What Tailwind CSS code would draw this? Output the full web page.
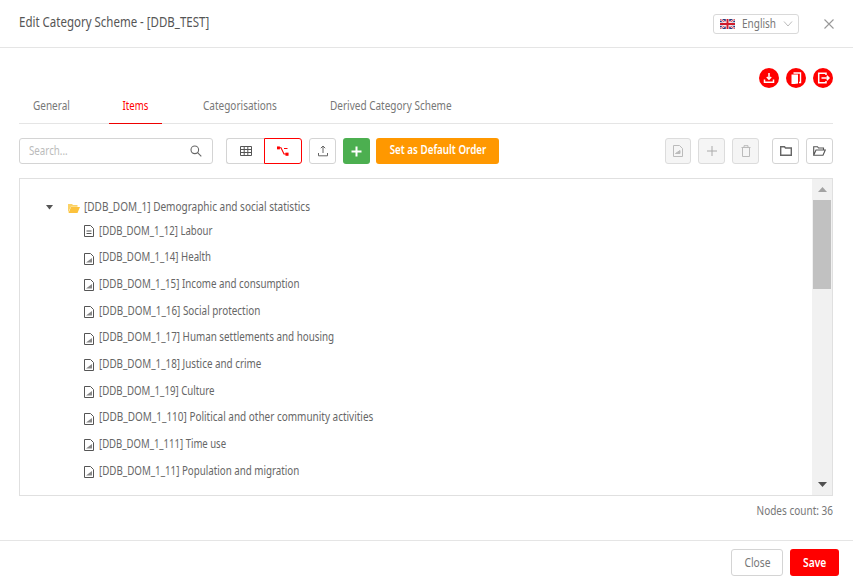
<!DOCTYPE html>
<html lang="en">
<head>
  <meta charset="UTF-8">
  <title>Edit Category Scheme</title>
  <script src="https://cdn.jsdelivr.net/npm/@tailwindcss/browser@4"></script>
</head>
<body class="w-[853px] h-[582px] overflow-hidden bg-white text-[#666] text-[13px] font-['Noto_Sans',sans-serif]">
  <!-- header -->
  <div class="h-[48px] border-b border-[#e5e5e5] flex items-center pl-[19px] pr-[19px]">
    <h1 class="text-[15px] font-normal text-[#555] -mt-[5px] whitespace-nowrap origin-left scale-x-[.766]">Edit Category Scheme - [DDB_TEST]</h1>
    <div class="ml-auto w-[86px] h-[20px] border border-[#d9d9d9] rounded-[3px] flex items-center pl-[6px] gap-[7px] text-[#777]">
      <svg class="shrink-0" width="15" height="10" viewBox="0 0 15 10"><rect width="15" height="10" fill="#2b3a7c"/><path d="M0 0L15 10M15 0L0 10" stroke="#fff" stroke-width="2"/><path d="M0 0L15 10M15 0L0 10" stroke="#cf1b2b" stroke-width="0.8"/><path d="M7.5 0V10M0 5H15" stroke="#fff" stroke-width="3.4"/><path d="M7.5 0V10M0 5H15" stroke="#cf1b2b" stroke-width="2"/></svg>
      <span class="w-[34px] whitespace-nowrap origin-left scale-x-[.77]">English</span>
      <svg class="shrink-0" width="10" height="6" viewBox="0 0 10 6" fill="none" stroke="#bbb"><path d="M1 .5L5 5L9 .5"/></svg>
    </div>
    <svg class="ml-[25px]" width="10" height="10" viewBox="0 0 10 10" stroke="#999" stroke-width="1.1"><path d="M.5 .5L9.5 9.5M9.5 .5L.5 9.5"/></svg>
  </div>

  <main class="px-[20px]">
    <!-- red actions -->
    <div class="h-[20px] mt-[20px] flex justify-end gap-[7px]">
      <span class="w-[20px] h-[20px] rounded-full bg-[#f00] flex items-center justify-center">
        <svg width="12" height="12" viewBox="0 0 12 12" fill="none" stroke="#fff" stroke-width="1.5"><path d="M6 1V7M3.8 5L6 7.2L8.2 5M1.5 7.5V10.3H10.5V7.5"/></svg>
      </span>
      <span class="w-[20px] h-[20px] rounded-full bg-[#f00] flex items-center justify-center">
        <svg width="12" height="13" viewBox="0 0 12 13"><path d="M1.5 2.5H8V11.5L4.5 12H1.5Z" fill="#fff"/><path d="M3.5 1H10.5V10.5H9" fill="none" stroke="#fff" stroke-width="1.4"/></svg>
      </span>
      <span class="w-[20px] h-[20px] rounded-full bg-[#f00] flex items-center justify-center">
        <svg width="13" height="12" viewBox="0 0 13 12" fill="none" stroke="#fff" stroke-width="1.5"><path d="M9 3V1.3H1.7V10.7H9V9M4.5 6H12M9.8 3.8L12 6L9.8 8.2"/></svg>
      </span>
    </div>

    <!-- tabs -->
    <nav class="-ml-px mt-[2px] h-[34px] border-b border-[#e5e5e5] flex text-[#777]">
      <div class="w-[90px] h-[34px] flex items-center pl-[14px]"><span class="-mt-[2px] origin-left scale-x-[.77]">General</span></div>
      <div class="w-[53px] h-[34px] flex items-center justify-center text-[#f00] border-b border-[#e00]"><span class="-mt-[1px] scale-x-[.74]">Items</span></div>
      <div class="ml-[41px] w-[127px] flex items-center h-[33px]"><span class="-mt-[2px] origin-left scale-x-[.77]">Categorisations</span></div>
      <div class="flex items-center h-[33px]"><span class="-mt-[2px] whitespace-nowrap origin-left scale-x-[.77]">Derived Category Scheme</span></div>
    </nav>

    <!-- toolbar -->
    <div class="-ml-px mt-[14px] h-[26px] flex">
      <div class="w-[194px] border border-[#d4d4d4] rounded-[3px] flex items-center justify-between pl-[9px] pr-[10px] text-[#bbb]">
        <span class="origin-left scale-x-[.75]">Search...</span>
        <svg width="12" height="12" viewBox="0 0 12 12" fill="none" stroke="#666" stroke-width="1.1"><circle cx="4.8" cy="4.8" r="3.8"/><path d="M7.6 7.6L11.3 11.3"/></svg>
      </div>
      <div class="ml-[13px] flex">
        <span class="w-[38px] border border-r-0 border-[#d4d4d4] rounded-l-[3px] flex items-center justify-center">
          <svg width="12" height="10" viewBox="0 0 12 10" fill="none" stroke="#555"><path d="M.5 .5H11.5V9.5H.5ZM.5 3.5H11.5M.5 6.5H11.5M4.2 .5V9.5M7.8 .5V9.5"/></svg>
        </span>
        <span class="w-[38px] border border-[#f00] rounded-r-[3px] flex items-center justify-center">
          <svg width="12" height="10" viewBox="0 0 12 10" fill="none" stroke="#f00" stroke-width="1.1"><path d="M1.5 1.7H4L7 8H10M7 2.5H10.5"/><rect x=".5" y="1" width="1.8" height="1.8" fill="#f00"/><rect x="9" y="7.2" width="2" height="2" fill="#f00"/></svg>
        </span>
      </div>
      <span class="ml-[7px] w-[27px] border border-[#d4d4d4] rounded-[3px] flex items-center justify-center">
        <svg width="12" height="12" viewBox="0 0 12 12" fill="none" stroke="#666"><path d="M6 8V1.2M3.8 3.2L6 1L8.2 3.2M1.5 8V10.8H10.5V8"/></svg>
      </span>
      <span class="ml-[7px] w-[27px] rounded-[3px] bg-[#4caf50] flex items-center justify-center">
        <svg width="11" height="11" viewBox="0 0 11 11" stroke="#fff" stroke-width="2"><path d="M5.5 .5V10.5M.5 5.5H10.5"/></svg>
      </span>
      <div class="ml-[6px] w-[123px] rounded-[3px] bg-[#ff9800] flex items-center justify-center text-white font-semibold"><span class="-mt-[2px] whitespace-nowrap scale-x-[.755]">Set as Default Order</span></div>
      <span class="ml-auto w-[26px] border border-[#dcdcdc] bg-[#f5f5f5] rounded-[3px] flex items-center justify-center">
        <svg width="10" height="12" viewBox="0 0 10 12" fill="none" stroke="#bbb"><path d="M.5 .5H6.5L9.5 3.5V11.5H.5Z"/><path d="M2.5 8.5L7 5.5V8.5Z" fill="#bbb"/></svg>
      </span>
      <span class="ml-[7px] w-[27px] border border-[#dcdcdc] bg-[#f5f5f5] rounded-[3px] flex items-center justify-center">
        <svg width="10" height="10" viewBox="0 0 10 10" stroke="#aaa"><path d="M5 0V10M0 5H10"/></svg>
      </span>
      <span class="ml-[7px] w-[27px] border border-[#dcdcdc] bg-[#f5f5f5] rounded-[3px] flex items-center justify-center">
        <svg width="10" height="12" viewBox="0 0 10 12" fill="none" stroke="#bbb"><path d="M1.5 3V11.5H8.5V3M.5 2.5H9.5M3 2.5V.7H7V2.5"/></svg>
      </span>
      <span class="ml-[13px] w-[27px] border border-[#d4d4d4] rounded-[3px] flex items-center justify-center">
        <svg width="12" height="10" viewBox="0 0 12 10" fill="none" stroke="#666" stroke-width="1.4"><path d="M.7 .7H4.5L5.5 2H11.3V9.3H.7Z"/></svg>
      </span>
      <span class="ml-[7px] w-[27px] border border-[#d4d4d4] rounded-[3px] flex items-center justify-center">
        <svg width="13" height="10" viewBox="0 0 13 10" fill="none" stroke="#555" stroke-width="1.1"><path d="M.7 9.3V.7H4.5L5.5 2H10.5V4M.7 9.3H10L12.3 4H3Z"/></svg>
      </span>
    </div>

    <!-- tree -->
    <div class="-ml-px mt-[14px] w-[814px] h-[318px] border border-[#e0e0e0] flex">
      <div class="flex-1 pt-[19px] pl-[26px]">
        <div class="h-[18px] flex items-center">
          <svg width="8" height="5" viewBox="0 0 8 5" fill="#555"><path d="M0 0H7L3.5 4.5Z"/></svg>
          <svg class="ml-[14px] mr-[4px] mt-[2px]" width="12" height="10" viewBox="0 0 12 10"><path d="M0 9.5V1H4L5 2H9.5V3.8H3L0 9.5Z" fill="#fbd266"/><path d="M.5 10L3 4H12L9.5 10Z" fill="#fcc23d"/></svg>
          <span class="origin-left scale-x-[.77]">[DDB_DOM_1] Demographic and social statistics</span>
        </div>
        <ul class="pl-[38px] mt-[1px]">
          <li class="h-[26.7px] flex items-center gap-[5px]">
            <svg class="mt-[2px]" width="10" height="12" viewBox="0 0 10 12" fill="none" stroke="#555"><path d="M.5 .5H6.5L9.5 3.5V11.5H.5ZM2.5 6H7.5M2.5 8.5H7.5"/></svg>
            <span class="origin-left scale-x-[.737]">[DDB_DOM_1_12] Labour</span>
          </li>
          <li class="h-[26.7px] flex items-center gap-[5px]">
            <svg class="mt-[3px]" width="10" height="12" viewBox="0 0 10 12" fill="none" stroke="#555"><path d="M.5 .5H6.5L9.5 3.5V11.5H.5Z"/><path d="M2 9.5L8 5V9.5Z" fill="#888" stroke="none"/></svg>
            <span class="origin-left scale-x-[.743]">[DDB_DOM_1_14] Health</span>
          </li>
          <li class="h-[26.7px] flex items-center gap-[5px]">
            <svg class="mt-[3px]" width="10" height="12" viewBox="0 0 10 12" fill="none" stroke="#555"><path d="M.5 .5H6.5L9.5 3.5V11.5H.5Z"/><path d="M2 9.5L8 5V9.5Z" fill="#888" stroke="none"/></svg>
            <span class="origin-left scale-x-[.751]">[DDB_DOM_1_15] Income and consumption</span>
          </li>
          <li class="h-[26.7px] flex items-center gap-[5px]">
            <svg class="mt-[3px]" width="10" height="12" viewBox="0 0 10 12" fill="none" stroke="#555"><path d="M.5 .5H6.5L9.5 3.5V11.5H.5Z"/><path d="M2 9.5L8 5V9.5Z" fill="#888" stroke="none"/></svg>
            <span class="origin-left scale-x-[.76]">[DDB_DOM_1_16] Social protection</span>
          </li>
          <li class="h-[26.7px] flex items-center gap-[5px]">
            <svg class="mt-[3px]" width="10" height="12" viewBox="0 0 10 12" fill="none" stroke="#555"><path d="M.5 .5H6.5L9.5 3.5V11.5H.5Z"/><path d="M2 9.5L8 5V9.5Z" fill="#888" stroke="none"/></svg>
            <span class="origin-left scale-x-[.757]">[DDB_DOM_1_17] Human settlements and housing</span>
          </li>
          <li class="h-[26.7px] flex items-center gap-[5px]">
            <svg class="mt-[3px]" width="10" height="12" viewBox="0 0 10 12" fill="none" stroke="#555"><path d="M.5 .5H6.5L9.5 3.5V11.5H.5Z"/><path d="M2 9.5L8 5V9.5Z" fill="#888" stroke="none"/></svg>
            <span class="origin-left scale-x-[.757]">[DDB_DOM_1_18] Justice and crime</span>
          </li>
          <li class="h-[26.7px] flex items-center gap-[5px]">
            <svg class="mt-[3px]" width="10" height="12" viewBox="0 0 10 12" fill="none" stroke="#555"><path d="M.5 .5H6.5L9.5 3.5V11.5H.5Z"/><path d="M2 9.5L8 5V9.5Z" fill="#888" stroke="none"/></svg>
            <span class="origin-left scale-x-[.744]">[DDB_DOM_1_19] Culture</span>
          </li>
          <li class="h-[26.7px] flex items-center gap-[5px]">
            <svg class="mt-[3px]" width="10" height="12" viewBox="0 0 10 12" fill="none" stroke="#555"><path d="M.5 .5H6.5L9.5 3.5V11.5H.5Z"/><path d="M2 9.5L8 5V9.5Z" fill="#888" stroke="none"/></svg>
            <span class="origin-left scale-x-[.767]">[DDB_DOM_1_110] Political and other community activities</span>
          </li>
          <li class="h-[26.7px] flex items-center gap-[5px]">
            <svg class="mt-[3px]" width="10" height="12" viewBox="0 0 10 12" fill="none" stroke="#555"><path d="M.5 .5H6.5L9.5 3.5V11.5H.5Z"/><path d="M2 9.5L8 5V9.5Z" fill="#888" stroke="none"/></svg>
            <span class="origin-left scale-x-[.735]">[DDB_DOM_1_111] Time use</span>
          </li>
          <li class="h-[26.7px] flex items-center gap-[5px]">
            <svg class="mt-[3px]" width="10" height="12" viewBox="0 0 10 12" fill="none" stroke="#555"><path d="M.5 .5H6.5L9.5 3.5V11.5H.5Z"/><path d="M2 9.5L8 5V9.5Z" fill="#888" stroke="none"/></svg>
            <span class="origin-left scale-x-[.751]">[DDB_DOM_1_11] Population and migration</span>
          </li>
        </ul>
      </div>
      <!-- scrollbar -->
      <div class="w-[20px] bg-[#f1f1f1] flex flex-col items-center">
        <svg class="mt-[8px]" width="9" height="5" viewBox="0 0 9 5" fill="#a3a3a3"><path d="M4.5 0L9 5H0Z"/></svg>
        <div class="mt-[8px] w-[18px] h-[89px] bg-[#c1c1c1]"></div>
        <svg class="mt-auto mb-[8px]" width="9" height="5" viewBox="0 0 9 5" fill="#505050"><path d="M0 0H9L4.5 5Z"/></svg>
      </div>
    </div>

    <p class="-ml-px w-[814px] h-[20px] mt-[5px] text-right text-[#777] origin-right scale-x-[.77]">Nodes count: 36</p>
  </main>

  <!-- footer -->
  <footer class="mt-[19px] h-[42px] border-t border-[#e5e5e5] pt-[8px] pr-[14px] flex justify-end gap-[7px]">
    <div class="w-[52px] h-[27px] border border-[#d4d4d4] rounded-[3px] flex items-center justify-center text-[#777]"><span class="scale-x-[.79]">Close</span></div>
    <div class="w-[49px] h-[27px] rounded-[3px] bg-[#f00] flex items-center justify-center font-semibold text-white"><span class="scale-x-[.79]">Save</span></div>
  </footer>
</body>
</html>
